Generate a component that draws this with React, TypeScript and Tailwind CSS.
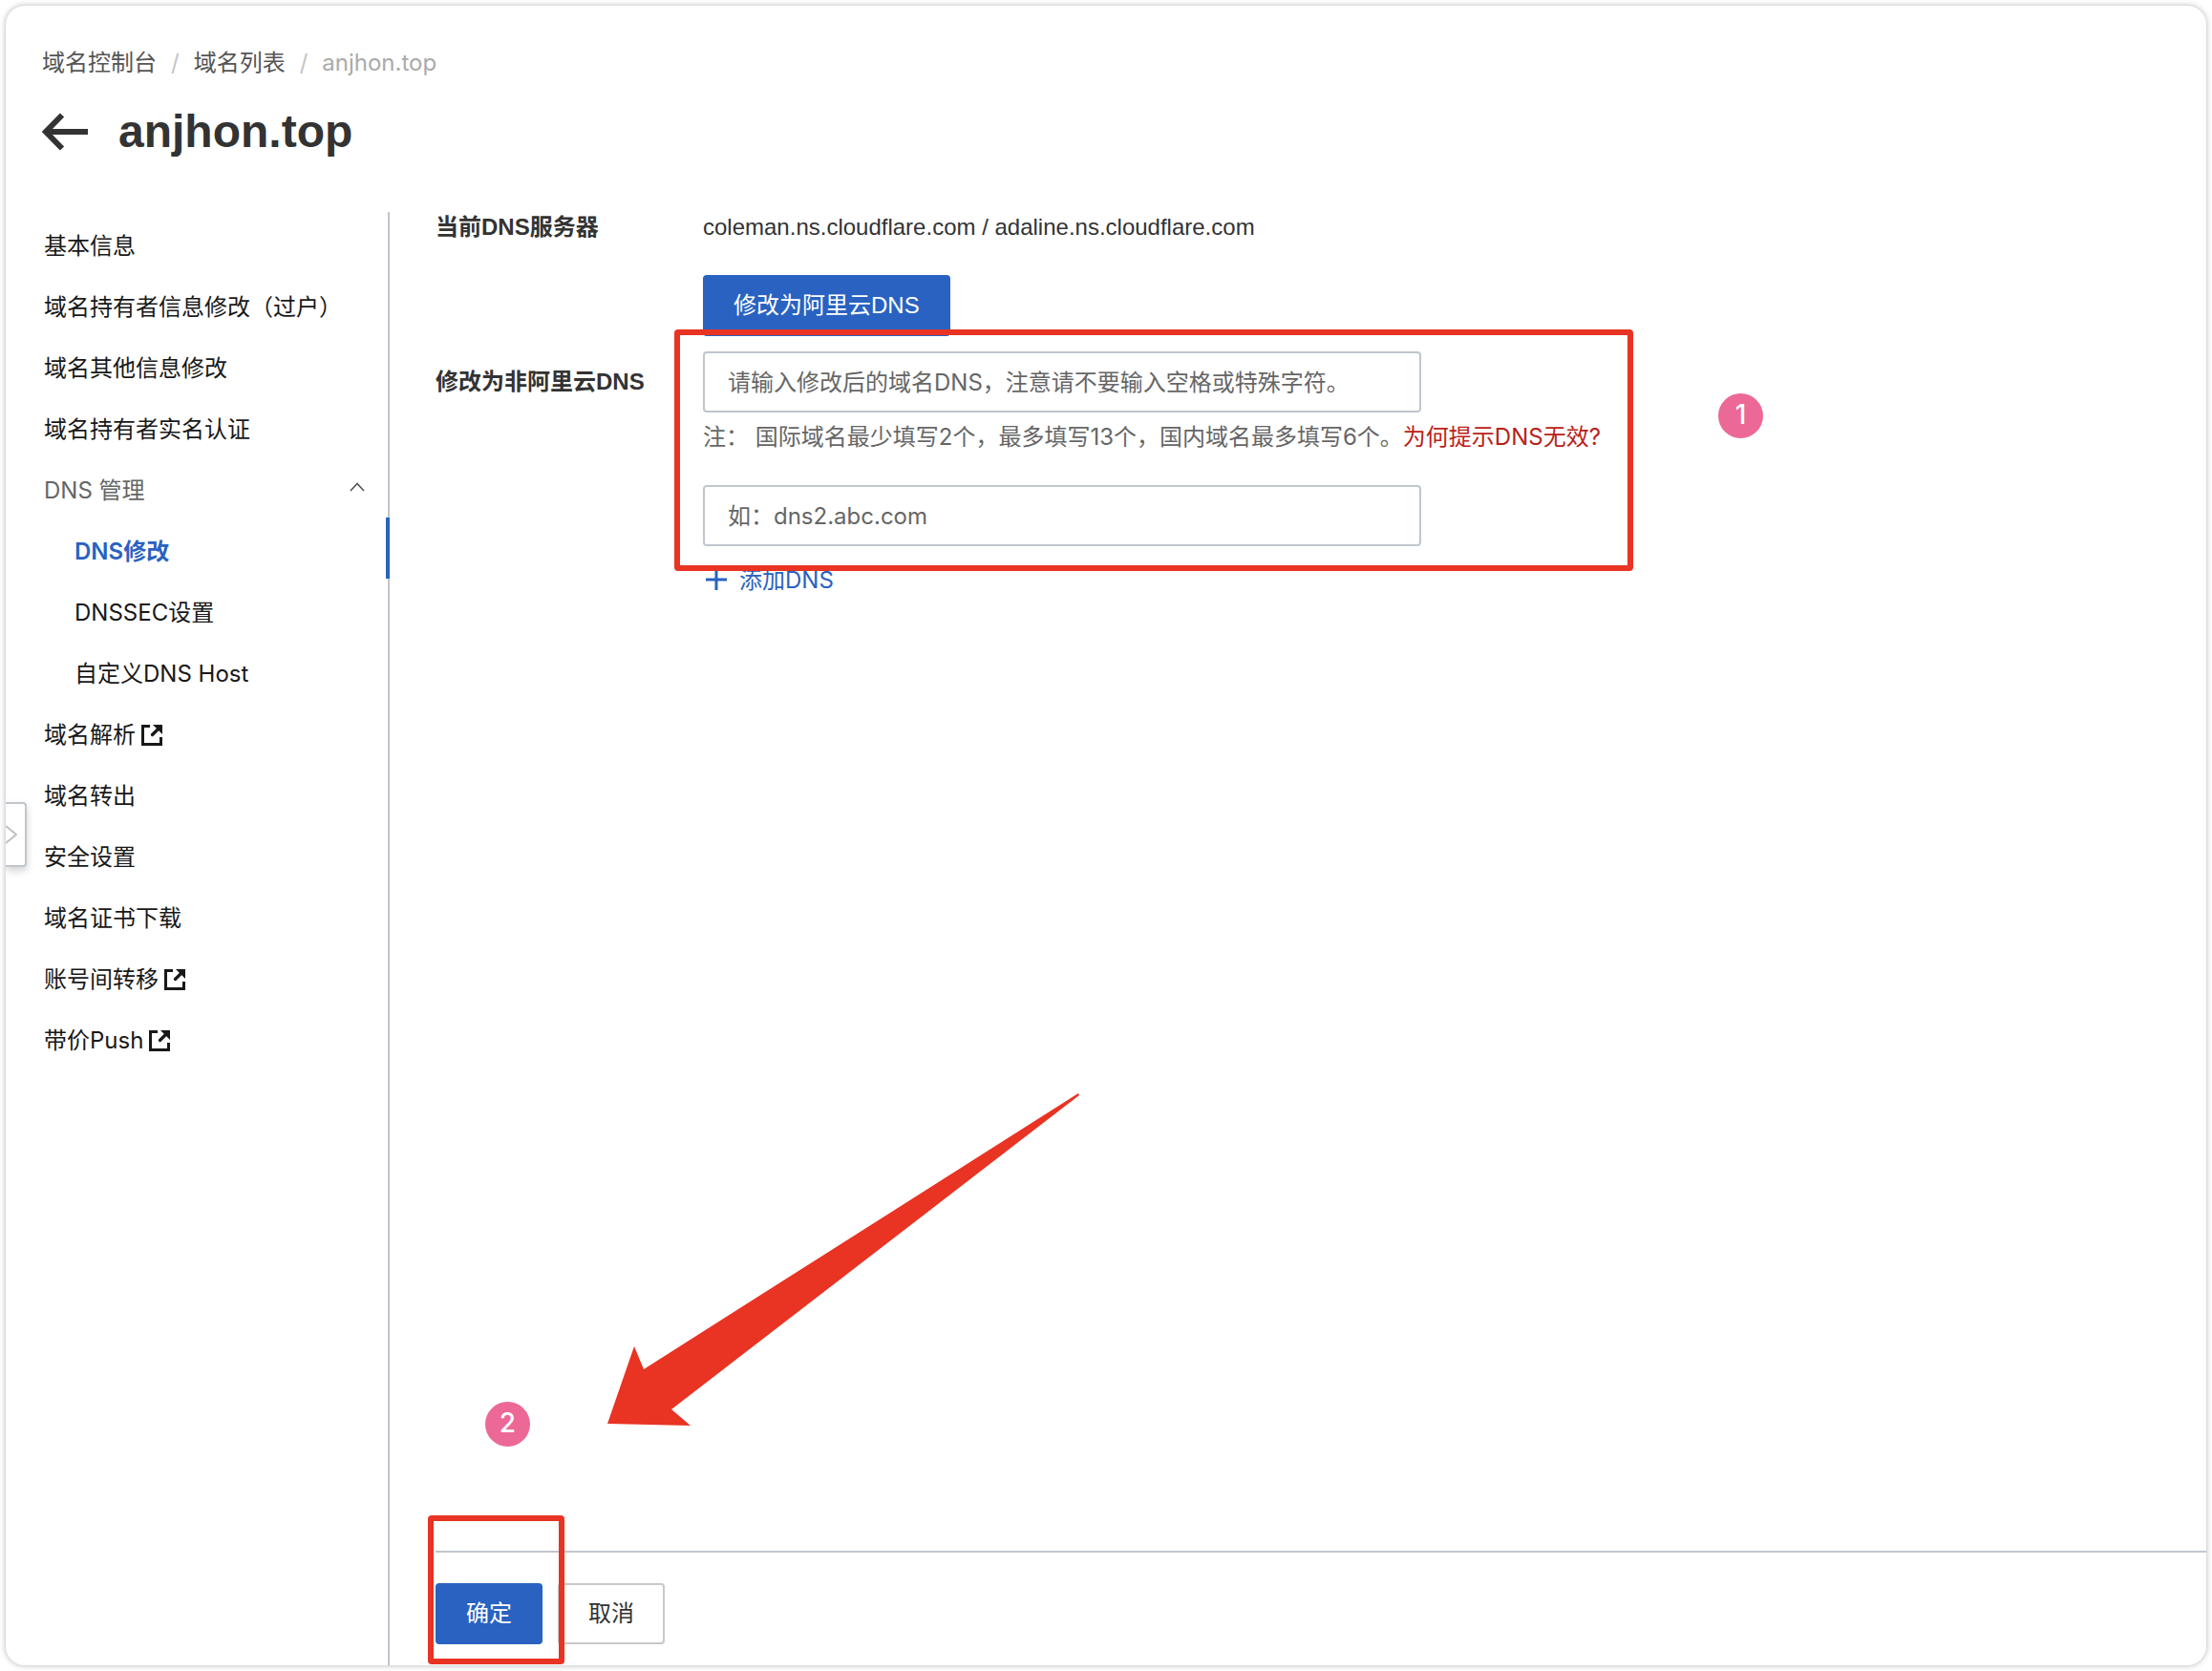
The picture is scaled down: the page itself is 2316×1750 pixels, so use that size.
import { useState } from "react";

const SYSTEM_FONT = "font-['Inter','Noto_Sans_CJK_SC',sans-serif]";
const FORM_FONT = "font-['Liberation_Sans','Noto_Sans_CJK_SC',sans-serif]";

type NavEntry = { label: string; external?: boolean };

const topItems: NavEntry[] = [
  { label: "基本信息" },
  { label: "域名持有者信息修改（过户）" },
  { label: "域名其他信息修改" },
  { label: "域名持有者实名认证" },
];

const dnsItems = ["DNS修改", "DNSSEC设置", "自定义DNS Host"];

const bottomItems: NavEntry[] = [
  { label: "域名解析", external: true },
  { label: "域名转出" },
  { label: "安全设置" },
  { label: "域名证书下载" },
  { label: "账号间转移", external: true },
  { label: "带价Push", external: true },
];

function ExternalIcon() {
  return (
    <svg viewBox="0 0 22 22" className="size-[22px]" fill="none" aria-hidden="true">
      <path d="M9 1.5H1.5V20.5H20.5V13" stroke="currentColor" strokeWidth="3" />
      <path d="M11.5 10.5L18 4" stroke="currentColor" strokeWidth="3.2" strokeLinecap="round" />
      <path d="M12 0H22V10Z" fill="currentColor" />
    </svg>
  );
}

function NavLink({ label, external }: NavEntry) {
  return (
    <li>
      <a href="#" className="flex h-16 items-center gap-1.5 pt-2 pl-10">
        {label}
        {external && <ExternalIcon />}
      </a>
    </li>
  );
}

function Sidebar() {
  const [open, setOpen] = useState(true);
  const [active, setActive] = useState("DNS修改");
  return (
    <nav className="w-[402px] shrink-0 border-r-2 border-[#c0c6cc] text-[24px] text-[#181818]">
      <ul>
        {topItems.map((item) => (
          <NavLink key={item.label} {...item} />
        ))}
        <li>
          <button
            type="button"
            aria-expanded={open}
            onClick={() => setOpen(!open)}
            className="flex h-16 w-full items-center justify-between pt-2 pr-6 pl-10 text-[#666]"
          >
            DNS 管理
            <svg viewBox="0 0 16 10" className="mb-2 h-[10px] w-4" fill="none" aria-hidden="true">
              <path d="M1 9L8 1.5L15 9" stroke="#555" strokeWidth="1.6" />
            </svg>
          </button>
          {open && (
            <ul>
              {dnsItems.map((label) => (
                <li key={label} className="-mr-0.5">
                  <a
                    href="#"
                    onClick={() => setActive(label)}
                    className={
                      label === active
                        ? "flex h-16 items-center border-r-4 border-[#2962c1] pt-2 pl-[72px] font-semibold text-[#2962c1]"
                        : "flex h-16 items-center pt-2 pl-[72px]"
                    }
                  >
                    {label}
                  </a>
                </li>
              ))}
            </ul>
          )}
        </li>
        {bottomItems.map((item) => (
          <NavLink key={item.label} {...item} />
        ))}
      </ul>
    </nav>
  );
}

function Header() {
  return (
    <header className="px-[38px] pt-11 pb-14">
      <nav aria-label="面包屑" className="flex h-8 items-center gap-[15px] text-[24px] text-[#555]">
        <a href="#">域名控制台</a>
        <span className="text-[#c4c4c4]">/</span>
        <a href="#">域名列表</a>
        <span className="text-[#c4c4c4]">/</span>
        <span className="text-[#aaa]">anjhon.top</span>
      </nav>
      <div className="mt-7 flex h-14 items-center gap-8">
        <button type="button" aria-label="返回">
          <svg viewBox="0 0 48 40" className="h-10 w-12" fill="none" aria-hidden="true">
            <path d="M21 2.5L4 20L21 37.5M4 20H48" stroke="#333" strokeWidth="6" />
          </svg>
        </button>
        <h1 className="font-['Liberation_Sans',sans-serif] text-[48px] font-bold text-[#333]">anjhon.top</h1>
      </div>
    </header>
  );
}

function DnsForm() {
  return (
    <div className={`${FORM_FONT} grid grid-cols-[280px_1fr] text-[24px] text-[#333]`}>
      <div className="font-bold leading-8">当前DNS服务器</div>
      <div>
        <p className="leading-8">coleman.ns.cloudflare.com / adaline.ns.cloudflare.com</p>
        <button type="button" className="mt-[34px] h-16 rounded bg-[#2962c1] px-8 text-white">
          修改为阿里云DNS
        </button>
      </div>
      <label htmlFor="dns1" className="mt-4 font-bold leading-[64px]">
        修改为非阿里云DNS
      </label>
      <div className={`${SYSTEM_FONT} mt-4`}>
        <div className="relative">
          <input
            id="dns1"
            placeholder="请输入修改后的域名DNS，注意请不要输入空格或特殊字符。"
            className="block h-16 w-[752px] rounded border-2 border-[#c0c6cc] px-6 placeholder:text-[#666]"
          />
          <p className="mt-2 leading-9 text-[#666]">
            注： 国际域名最少填写2个，最多填写13个，国内域名最多填写6个。
            <a href="#" className="text-[#ba2117]">
              为何提示DNS无效?
            </a>
          </p>
          <input
            aria-label="DNS 2"
            placeholder="如：dns2.abc.com"
            className="mt-8 block h-16 w-[752px] rounded border-2 border-[#c0c6cc] px-6 placeholder:text-[#666]"
          />
          <div className="pointer-events-none absolute -top-[23px] -bottom-[26px] -left-[30px] w-[1004px] rounded border-6 border-[#e93323]" />
          <Badge className="absolute top-11 left-[1063px]">1</Badge>
        </div>
        <button type="button" className="mt-5 flex h-8 items-center gap-2.5 text-[#2962c1]">
          <svg viewBox="0 0 28 24" className="h-6 w-7" fill="none" aria-hidden="true">
            <path d="M14 0V22M3 11H25" stroke="currentColor" strokeWidth="3" />
          </svg>
          添加DNS
        </button>
      </div>
    </div>
  );
}

function Badge({ children, className }: { children: string; className: string }) {
  return (
    <span
      className={`${className} flex size-[47px] items-center justify-center rounded-full bg-[#ec6896] pb-1 font-['Inter',sans-serif] text-[28px] font-medium text-white`}
    >
      {children}
    </span>
  );
}

function Footer() {
  return (
    <footer className="relative flex gap-4 border-t-2 border-[#c0c6cc] pt-8 pb-[22px] text-[24px]">
      <button type="button" className="h-16 rounded bg-[#2962c1] px-8 text-white">
        确定
      </button>
      <button type="button" className="h-16 rounded border-2 border-[#c8c8c8] px-[30px] text-[#333]">
        取消
      </button>
      <div className="pointer-events-none absolute -top-[39px] bottom-px -left-2 w-[143px] rounded border-6 border-[#e93323]" />
      <Badge className="absolute -top-[158px] left-[52px]">2</Badge>
      <svg
        viewBox="0 0 496 350"
        className="pointer-events-none absolute -top-[483px] left-[180px] h-[350px] w-[496px]"
        aria-hidden="true"
      >
        <path d="M493 2L494 4L67 333L87 350L0 348L28 267L38 291Z" fill="#e93323" />
      </svg>
    </footer>
  );
}

export default function App() {
  return (
    <div className={`${SYSTEM_FONT} min-h-screen bg-white p-1.5`}>
      <div className="relative flex min-h-[calc(100vh-12px)] flex-col overflow-hidden rounded-[20px] bg-white shadow-[0_0_6px_rgba(0,0,0,0.3)]">
        <Header />
        <div className="flex flex-1">
          <Sidebar />
          <main className="flex min-w-0 flex-1 flex-col pl-12">
            <div className="flex-1">
              <DnsForm />
            </div>
            <Footer />
          </main>
        </div>
        <button
          type="button"
          aria-label="展开"
          className="absolute top-[834px] left-0 h-[68px] w-[22px] rounded-r border-2 border-l-0 border-[#c0c6cc] bg-white shadow-[0_4px_8px_rgba(0,0,0,0.18)]"
        >
          <svg viewBox="0 0 12 20" className="h-5 w-3" fill="none" aria-hidden="true">
            <path d="M0 1L11 10L0 19" stroke="#c0c0c0" strokeWidth="2" />
          </svg>
        </button>
      </div>
    </div>
  );
}
